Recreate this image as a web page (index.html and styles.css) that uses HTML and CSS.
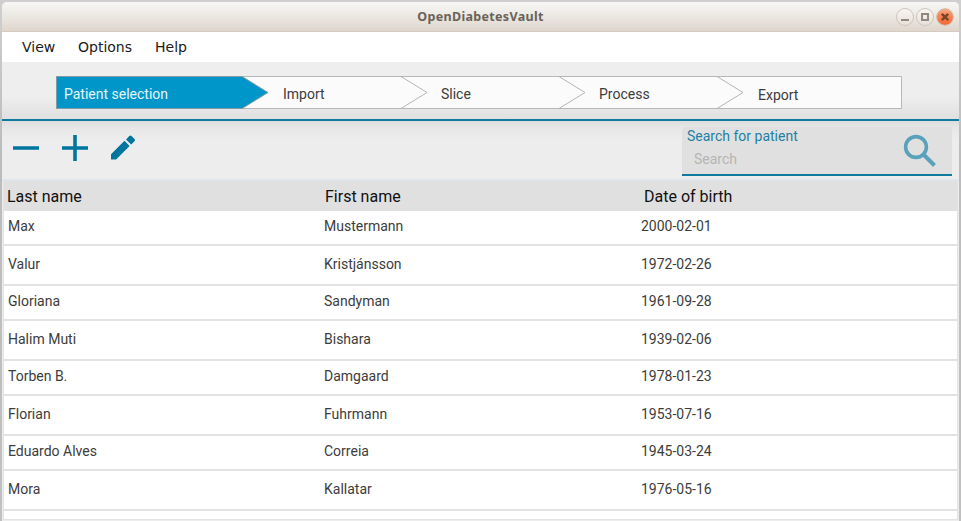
FILE: index.html
```html
<!DOCTYPE html>
<html lang="en">
<head>
<meta charset="utf-8">
<title>OpenDiabetesVault</title>
<link rel="stylesheet" href="styles.css">
</head>
<body>
<div class="window">
  <header class="titlebar">
    <span class="title">OpenDiabetesVault</span>
    <div class="controls">
      <svg width="58" height="20" viewBox="0 0 58 20">
        <defs>
          <linearGradient id="close" x1="0" y1="0" x2="0" y2="1"><stop offset="0" stop-color="#f7ab8c"/><stop offset=".5" stop-color="#f58152"/><stop offset="1" stop-color="#f06a30"/></linearGradient>
          <linearGradient id="plain" x1="0" y1="0" x2="0" y2="1"><stop offset="0" stop-color="#f8f6f4"/><stop offset="1" stop-color="#e8e0d9"/></linearGradient>
        </defs>
        <circle cx="9" cy="10" r="8.5" fill="url(#plain)" stroke="#cdc4bb"/>
        <circle cx="29" cy="10" r="8.5" fill="url(#plain)" stroke="#cdc4bb"/>
        <circle cx="49" cy="10" r="8.3" fill="url(#close)" stroke="#d3b5a3"/>
        <path d="M5 12h8v2H5z" fill="#92897d"/>
        <path d="M26 7h6v6h-6z" fill="none" stroke="#92897d" stroke-width="2"/>
        <path d="M45.800 6.800l6.400 6.400M52.200 6.800l-6.400 6.400" stroke="#7d4427" stroke-width="2.500"/>
      </svg>
    </div>
  </header>
  <nav class="menu"><span class="view">View</span><span class="options">Options</span><span>Help</span></nav>
  <section class="steps-bar">
    <div class="steps">
      <svg class="chevrons" width="846" height="33" viewBox="0 0 846 33">
        <path d="M.5 .5h845v32H.5z" fill="#fbfbfb" stroke="#b7b7b7"/>
        <path d="M.5 .5H186l26 16-26 16H.5z" fill="#0096c9" stroke="#7f9ba5"/>
        <path d="M345 .5l26 16-26 16M503 .5l26 16-26 16M661 .5l26 16-26 16" fill="none" stroke="#b5b5b5"/>
      </svg>
      <span class="step active">Patient selection</span>
      <span class="step">Import</span>
      <span class="step">Slice</span>
      <span class="step">Process</span>
      <span class="step last">Export</span>
    </div>
  </section>
  <section class="toolbar">
    <div class="tools">
      <svg width="130" height="30" viewBox="0 0 130 30" fill="#00769e">
        <path d="M2 13.200h26v3.600H2z"/>
        <path d="M51 13.200h11.200V2h3.600v11.200H77v3.600H65.800V28h-3.600V16.800H51z"/>
        <path d="M100 21.300l13.500-13.500 5.100 5.100L105.100 26.400H100zM115 6.400l3.300-3.300q1.100-1.100 2.200 0l3 3q1.100 1.100 0 2.200l-3.300 3.300z"/>
      </svg>
    </div>
    <div class="search">
      <div class="search-text"><label>Search for patient</label><span>Search</span></div>
      <svg width="34" height="34" viewBox="0 0 34 34" fill="none" stroke="#5aa2bb"><circle cx="13" cy="13" r="10.400" stroke-width="3.600"/><path d="M20 20l11.500 11.500" stroke-width="4"/></svg>
    </div>
  </section>
  <main class="table">
    <div class="row head"><span>Last name</span><span>First name</span><span>Date of birth</span></div>
    <div class="row"><span>Max</span><span>Mustermann</span><span>2000-02-01</span></div>
    <div class="row"><span>Valur</span><span>Kristjánsson</span><span>1972-02-26</span></div>
    <div class="row"><span>Gloriana</span><span>Sandyman</span><span>1961-09-28</span></div>
    <div class="row"><span>Halim Muti</span><span>Bishara</span><span>1939-02-06</span></div>
    <div class="row"><span>Torben B.</span><span>Damgaard</span><span>1978-01-23</span></div>
    <div class="row"><span>Florian</span><span>Fuhrmann</span><span>1953-07-16</span></div>
    <div class="row"><span>Eduardo Alves</span><span>Correia</span><span>1945-03-24</span></div>
    <div class="row"><span>Mora</span><span>Kallatar</span><span>1976-05-16</span></div>
  </main>
</div>
</body>
</html>
```

FILE: styles.css
```css
* { box-sizing: border-box; }
body {
  margin: 0;
  height: 521px;
  overflow: hidden;
  padding: 2px 2px 0;
  background: linear-gradient(#cfcfcf, #bcbcbc 30%, #c0c0c0);
  font-family: Roboto, sans-serif;
}
.window {
  height: 519px;
  border-radius: 5px 5px 0 0;
  overflow: hidden;
  background: #ededed;
}
.titlebar {
  position: relative;
  height: 30px;
  display: flex;
  align-items: center;
  justify-content: center;
  background: linear-gradient(#f8f7f5, #f0eeea 30%, #dfd6cd);
  border-bottom: 1px solid #d5cbc1;
}
.title {
  padding-top: 1px;
  font: bold 12.5px/30px "Noto Sans", sans-serif;
  color: #696258;
  letter-spacing: 0.33px;
}
.controls { position: absolute; right: 5px; top: 5px; height: 20px; }
.controls svg, .tools svg { display: block; }
.menu {
  height: 30px;
  padding-left: 20px;
  display: flex;
  background: #fff;
  color: #1a1a1a;
  font: 14px/30px "DejaVu Sans", sans-serif;
}
.menu .view { width: 56px; }
.menu .options { width: 77px; }
.steps-bar {
  height: 59px;
  padding: 14px 0 0 54px;
  background: linear-gradient(#eee 60%, #e0e0e0);
  border-bottom: 2px solid #0f7b9f;
}
.steps {
  position: relative;
  width: 846px;
  height: 33px;
  display: grid;
  grid-template-columns: 219px 158px 158px 159px 1fr;
}
.chevrons { position: absolute; left: 0; top: 0; }
.step {
  position: relative;
  padding-left: 8px;
  font-size: 14px;
  line-height: 36px;
  color: #3c3c3c;
}
.step.active { color: #e4f6fc; }
.step.last { top: 1px; }
.toolbar {
  height: 60px;
  padding: 6px 7px 0 9px;
  display: flex;
  justify-content: space-between;
  background: linear-gradient(#dedede, #e8e8e8 8px, #ededed 18px);
  border-bottom: 2px solid #dde7ec;
}
.tools { padding-top: 6px; }
.search {
  width: 270px;
  height: 49px;
  padding: 0 15px 0 5px;
  display: flex;
  justify-content: space-between;
  align-items: center;
  background: #e0e0e0;
  border-bottom: 2px solid #0f7b9f;
  border-radius: 3px 3px 0 0;
}
.search-text { display: flex; flex-direction: column; height: 47px; font-size: 14px; }
.search-text label { line-height: 18px; color: #1d80a4; }
.search-text span { padding-left: 7px; line-height: 28px; color: #b5b5b5; }
.table {
  height: 339px;
  margin: 0 1px;
  background: #fff;
  border: solid #e2e2e2;
  border-width: 0 1px 1px;
}
.row {
  height: 35px;
  display: grid;
  grid-template-columns: 316px 317px 1fr;
  border-bottom: 2px solid #e2e2e2;
  padding-left: 4px;
  font-size: 14px;
  line-height: 31px;
  color: #3c3c3c;
}
.row:nth-child(odd) { height: 40px; line-height: 37px; }
.row.head {
  height: 30px;
  padding-left: 3px;
  grid-template-columns: 318px 319px 1fr;
  background: #e0e0e0;
  border: 0;
  color: #111;
  font-size: 16px;
  line-height: 31px;
}
```
